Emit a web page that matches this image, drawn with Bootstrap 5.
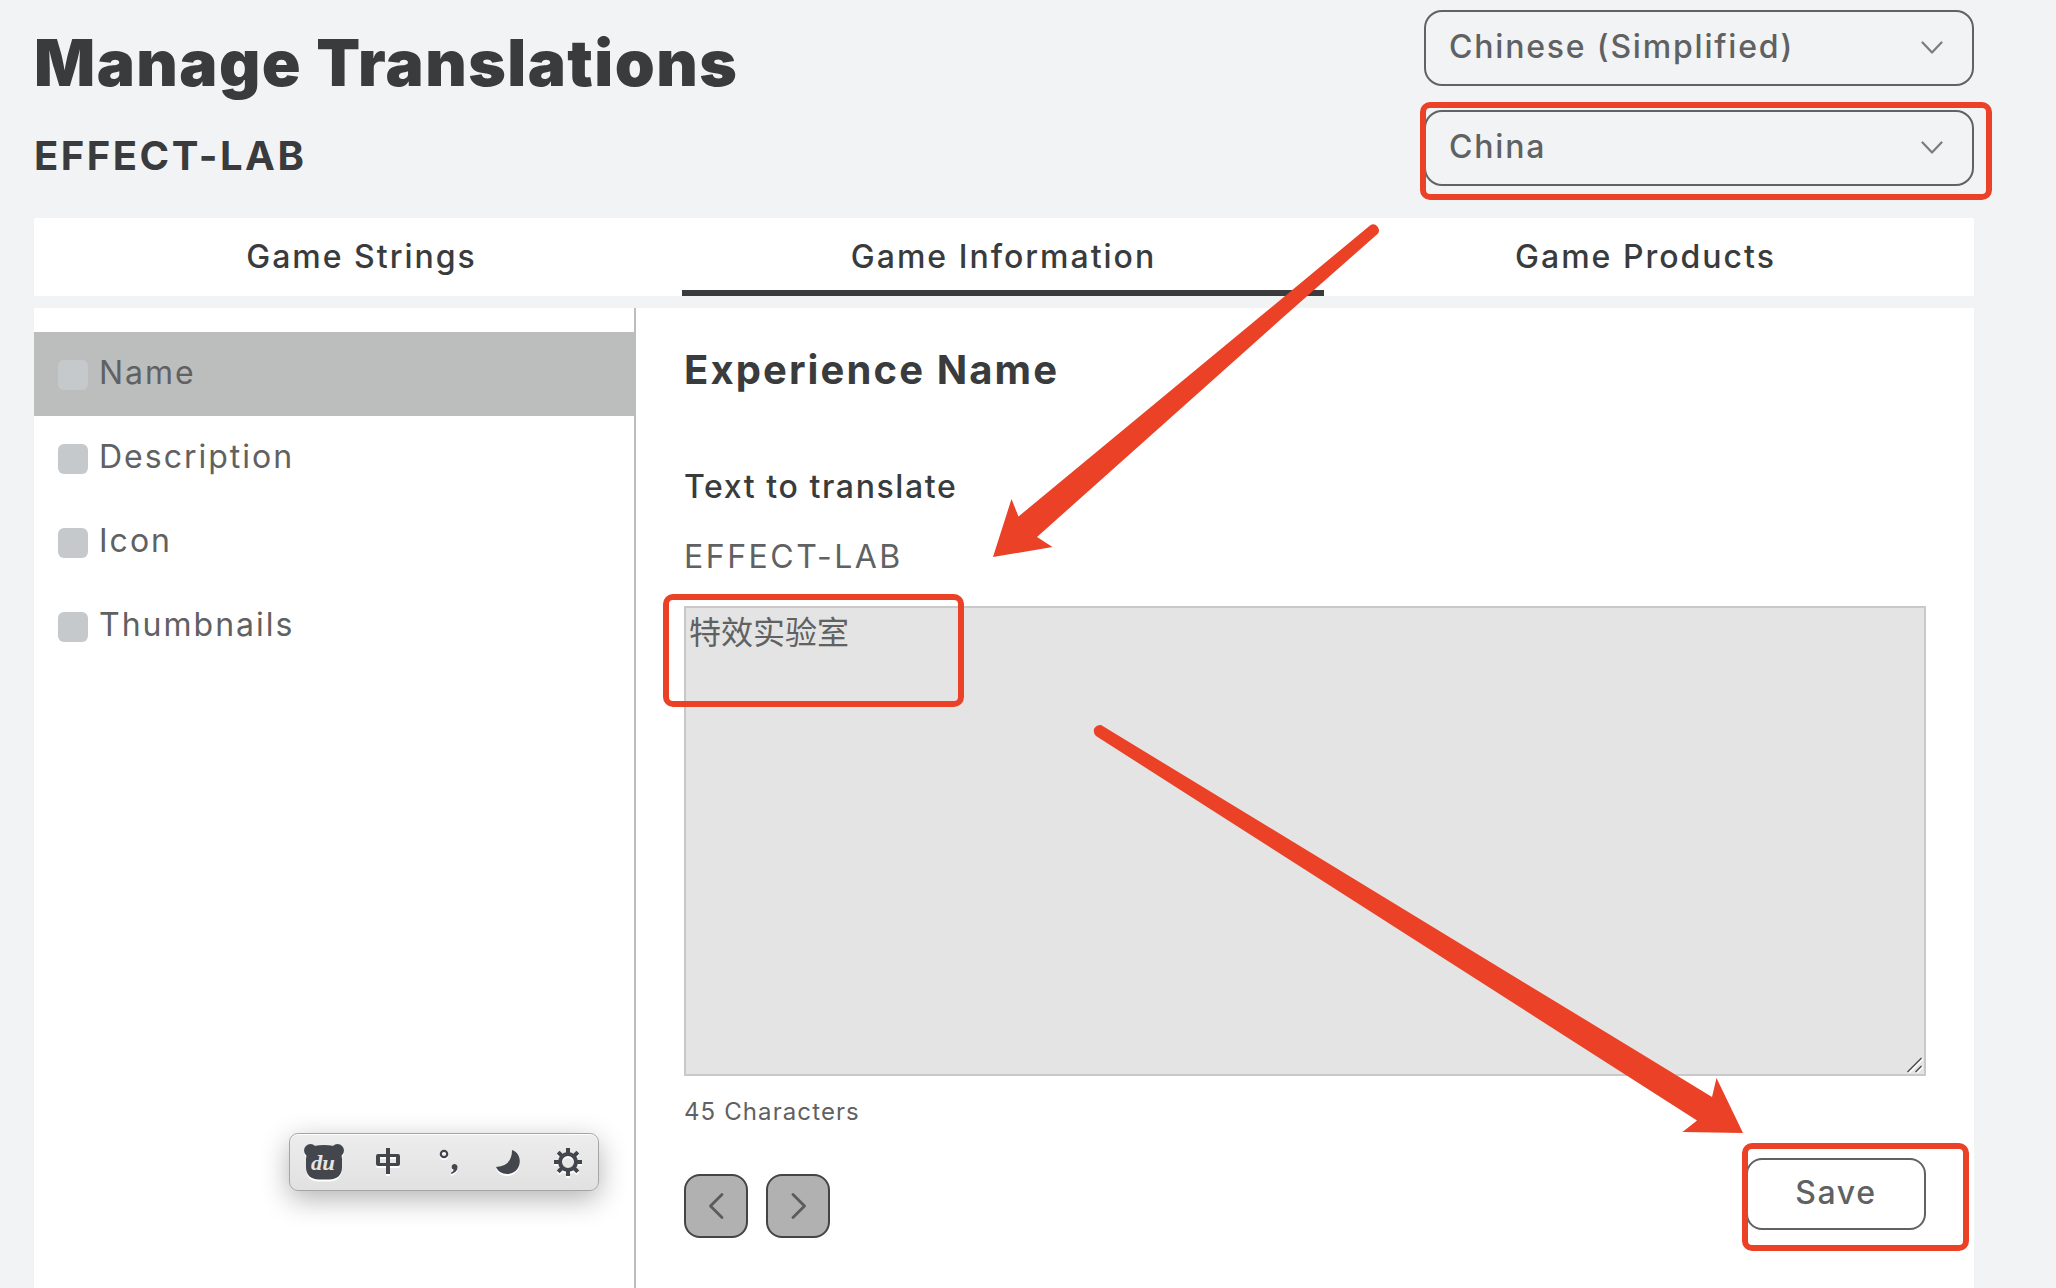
<!DOCTYPE html>
<html lang="en">
<head>
  <meta charset="UTF-8" />
  <meta name="viewport" content="width=device-width, initial-scale=1.0" />
  <title>Manage Translations</title>
  <link
    href="https://cdn.jsdelivr.net/npm/bootstrap@5.3.2/dist/css/bootstrap.min.css"
    rel="stylesheet"
  />
  <style>
    body {
      font-family: Inter, "Noto Sans CJK SC", sans-serif;
      font-size: 32px;
      line-height: 40px;
      letter-spacing: 2px;
      color: #606162;
      background: #f2f3f5;
    }
    .page { width: 1974px; height: 1288px; padding-left: 34px; }
    .dark { color: #393b3d; }
    .medium { font-weight: 500; }
    .page-head { height: 218px; padding-top: 10px; }
    .page-title { font-size: 64px; font-weight: 900; line-height: 77px; letter-spacing: 1.45px; margin: 14px 0 0; }
    .page-sub { font-size: 40px; font-weight: 700; line-height: 48px; letter-spacing: 2.5px; margin: 31px 0 0; }
    .picker {
      width: 550px;
      height: 76px;
      padding: 0 29px 2px 23px;
      border: 2px solid #606264;
      border-radius: 18px;
      letter-spacing: 1.8px;
    }
    .tab-bar { height: 78px; padding: 0 8px 0 6px; flex: none; }
    .tab-item { border-bottom: 6px solid transparent; padding: 5px 0 0 1px; }
    .tab-item.current { border-color: #393b3d; }
    .workspace { margin-top: 12px; }
    .side { width: 602px; padding-top: 24px; border-right: 2px solid #bbbdbc; flex: none; }
    .side-item { height: 84px; gap: 11px; padding: 0 0 3px 24px; }
    .side-item.current { background: #bcbebd; }
    .tick { width: 30px; height: 30px; border-radius: 6px; background: #c6c9cc; margin-top: 5px; }
    .editor { padding: 38px 48px 0; }
    .editor-title { font-size: 40px; font-weight: 700; line-height: 48px; letter-spacing: 2.1px; margin: 0; }
    .editor-label { letter-spacing: 1.6px; margin-top: 73px; }
    .source-text { letter-spacing: 2.5px; margin-top: 30px; }
    .target-box { margin-top: 29px; }
    .target-box textarea {
      height: 470px;
      padding: 3px;
      font-size: 32px;
      line-height: 44px;
      letter-spacing: 0;
      color: #606162;
      background: #e4e4e4;
      border: 2px solid #c9c9c9;
      resize: none;
    }
    .grip { right: 3px; bottom: 3px; }
    .counter { font-size: 24px; letter-spacing: 1.1px; line-height: 30px; margin-top: 21px; }
    .foot-row { margin-top: 31px; }
    .steps { gap: 18px; }
    .step { width: 64px; height: 64px; border: 2px solid #444; border-radius: 16px; background: #b1b1b1; margin-top: 16px; }
    .save { width: 180px; height: 72px; border: 2px solid #606162; border-radius: 16px; letter-spacing: 1.6px; padding-bottom: 3px; }
    .ime {
      left: 289px;
      top: 1133px;
      width: 310px;
      height: 58px;
      border: 1px solid #a5a5a5;
      border-radius: 9px;
      background: linear-gradient(#ededed, #e1e1e1);
      box-shadow: inset 0 1px 0 #fff, 0 8px 28px rgba(0, 0, 0, .3);
    }
    .marks { left: 0; top: 0; pointer-events: none; }
  </style>
</head>
<body class="position-relative overflow-hidden">

  <div class="page d-flex flex-column">
    <header class="page-head d-flex justify-content-between flex-shrink-0">
      <div>
        <h1 class="page-title dark">Manage Translations</h1>
        <h2 class="page-sub dark">EFFECT-LAB</h2>
      </div>
      <div class="d-flex flex-column gap-4">
        <div class="picker medium d-flex align-items-center justify-content-between" role="button">
          <span>Chinese (Simplified)</span>
          <svg width="22" height="14" viewBox="0 0 22 14" fill="none" stroke="#7b7c7e" stroke-width="2.2" stroke-linecap="round" stroke-linejoin="round"><path d="M1.5 2.5 11 12.5 20.5 2.5" /></svg>
        </div>
        <div class="picker medium d-flex align-items-center justify-content-between" role="button">
          <span>China</span>
          <svg width="22" height="14" viewBox="0 0 22 14" fill="none" stroke="#7b7c7e" stroke-width="2.2" stroke-linecap="round" stroke-linejoin="round"><path d="M1.5 2.5 11 12.5 20.5 2.5" /></svg>
        </div>
      </div>
    </header>

    <nav class="tab-bar medium d-flex bg-white dark text-center">
      <div class="tab-item w-100 d-flex align-items-center justify-content-center">Game Strings</div>
      <div class="tab-item current w-100 d-flex align-items-center justify-content-center">Game Information</div>
      <div class="tab-item w-100 d-flex align-items-center justify-content-center">Game Products</div>
    </nav>

    <main class="workspace d-flex flex-grow-1 bg-white">
      <aside class="side">
        <div class="side-item current d-flex align-items-center"><span class="tick"></span>Name</div>
        <div class="side-item d-flex align-items-center"><span class="tick"></span>Description</div>
        <div class="side-item d-flex align-items-center"><span class="tick"></span>Icon</div>
        <div class="side-item d-flex align-items-center"><span class="tick"></span>Thumbnails</div>
      </aside>

      <section class="editor flex-grow-1">
        <h3 class="editor-title dark">Experience Name</h3>
        <div class="editor-label medium dark">Text to translate</div>
        <div class="source-text">EFFECT-LAB</div>
        <div class="target-box position-relative">
          <textarea class="form-control rounded-0 d-block" spellcheck="false">特效实验室</textarea>
          <svg class="grip position-absolute" width="16" height="16" viewBox="0 0 16 16" fill="none"><path d="M2 16 16 2M10 16l6-6" stroke="#fff" stroke-width="1.5" /><path d="M.5 15 14.5 1M8.5 15l6-6" stroke="#4a4a4a" stroke-width="1.4" /></svg>
        </div>
        <div class="counter">45 Characters</div>
        <div class="foot-row d-flex justify-content-between">
          <div class="steps d-flex">
            <button class="step btn p-0 d-flex align-items-center justify-content-center" aria-label="Previous">
              <svg width="16" height="28" viewBox="0 0 16 28" fill="none" stroke="#5b5b5b" stroke-width="2.8" stroke-linecap="round" stroke-linejoin="round"><path d="M14 2.5 2.5 14 14 25.5" /></svg>
            </button>
            <button class="step btn p-0 d-flex align-items-center justify-content-center" aria-label="Next">
              <svg width="16" height="28" viewBox="0 0 16 28" fill="none" stroke="#5b5b5b" stroke-width="2.8" stroke-linecap="round" stroke-linejoin="round"><path d="M3 2.5 14.5 14 3 25.5" /></svg>
            </button>
          </div>
          <div class="save medium d-flex align-items-center justify-content-center" role="button">Save</div>
        </div>
      </section>
    </main>
  </div>

  <!-- floating input method bar -->
  <div class="ime position-absolute">
    <svg class="d-block" width="308" height="56" viewBox="290 1134 308 56">
      <defs>
        <g id="glyphs" fill="currentColor">
          <circle cx="310.5" cy="1150.5" r="6.5" />
          <circle cx="337.5" cy="1150.5" r="6.5" />
          <path d="M314 1146q10-2 20 0 8 3 8 13v8q0 12-13 12.5h-10q-13-.5-13-12.5v-8q0-10 8-13z" />
          <path d="M386 1148h4v26h-4z" />
          <path d="M378 1154h20q2 0 2 2v8q0 2-2 2h-20q-2 0-2-2v-8q0-2 2-2zm2 3v6h16v-6z" fill-rule="evenodd" />
          <circle cx="444" cy="1154" r="3.2" fill="none" stroke="currentColor" stroke-width="2.2" />
          <path d="M454 1164a3.2 3.2 0 0 1 3.5 3.2c0 3-2 5.5-6 6.8l-.5-1.2q2.5-1 2.7-3a3 3 0 0 1 .3-5.8z" />
          <path d="M512 1150c12 4 10 24-5 24q-8 0-11-7 16-1 16-17z" />
          <!-- gear -->
          <g fill="none" stroke="currentColor" stroke-width="4">
            <circle cx="568" cy="1162" r="8" />
            <path d="M568 1153v-5M568 1171v5M559 1162h-5M577 1162h5M561.5 1155.5l-3.3-3.3M574.5 1155.5l3.3-3.3M561.5 1168.5l-3.3 3.3M574.5 1168.5l3.3 3.3" />
          </g>
        </g>
      </defs>
      <use href="#glyphs" color="#fff" y="2" />
      <use href="#glyphs" color="#43474d" />
      <text x="311" y="1170" textLength="24" lengthAdjust="spacingAndGlyphs" font-family="Liberation Serif" font-size="22" font-weight="700" font-style="italic" letter-spacing="0" fill="#e6e6e6">du</text>
    </svg>
  </div>

  <!-- red annotations -->
  <svg class="marks position-absolute" width="2056" height="1288" viewBox="0 0 2056 1288">
    <g fill="none" stroke="#eb4126" stroke-width="6">
      <rect x="1423" y="105" width="566" height="92" rx="7" />
      <rect x="666" y="597" width="295" height="107" rx="7" />
      <rect x="1745" y="1146" width="221" height="102" rx="7" />
    </g>
    <g fill="#eb4126">
      <path d="M993 557l18.5-58 7 17.5L1256 320 1370 225.5q4-3 7.5 1 3 4.5 0 7.5L1280 320 1037 537l15.5 10z" />
      <path d="M1101 725q-4-.5-6.5 3-2 4 1.5 8L1697 1120.5 1682.5 1132 1743 1133 1716.5 1078 1712 1097 1640 1053z" />
    </g>
  </svg>

  <script src="https://cdn.jsdelivr.net/npm/bootstrap@5.3.2/dist/js/bootstrap.bundle.min.js"></script>
</body>
</html>
